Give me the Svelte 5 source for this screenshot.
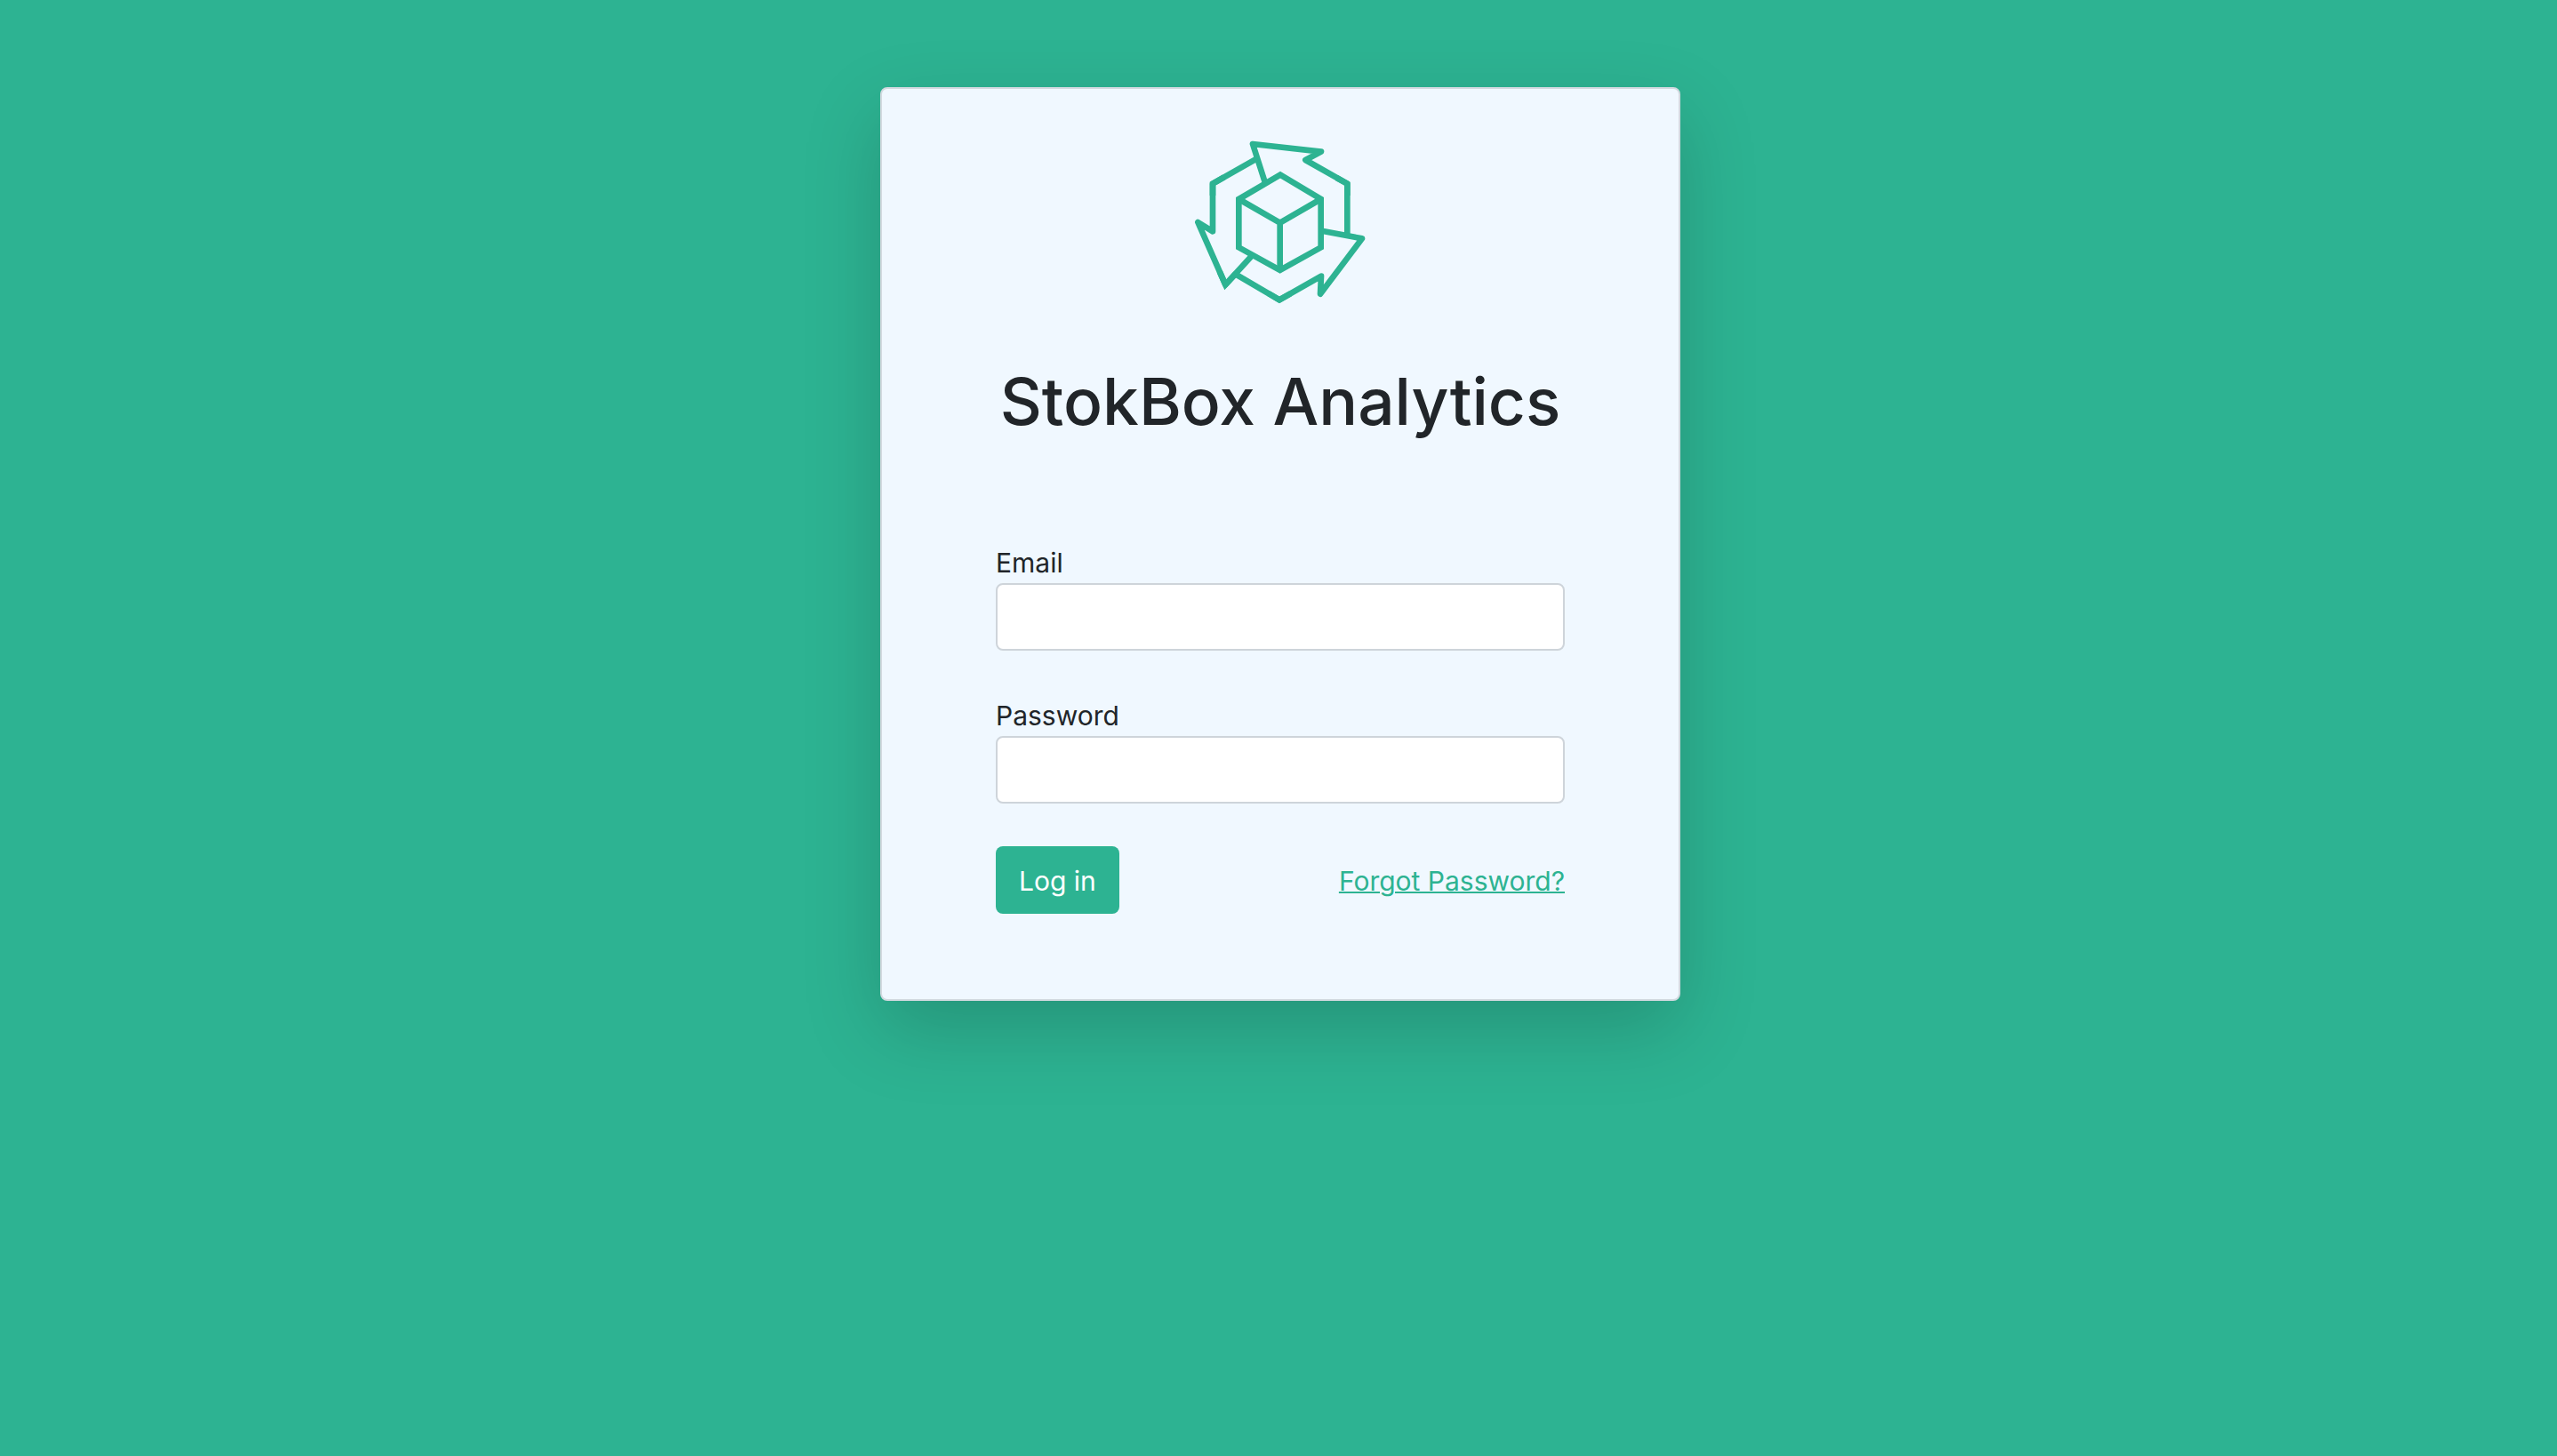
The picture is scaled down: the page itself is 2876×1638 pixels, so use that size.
<script>
  let email = $state('');
  let password = $state('');
</script>

<main class="page">
  <section class="card">
    <svg class="logo" viewBox="0 0 660 630" role="img" aria-label="StokBox logo">
      <g class="rounded">
        <path d="M279 182 L237 51 L468 77 L415 105 L556 185 V354" />
        <path d="M250 101 L102 185 V346 L52 315 L145 526 L236 426" />
        <path d="M470 344 L606 370 L465 557 L468 497 L327 577 L180 491" />
      </g>
      <g class="sharp">
        <path d="M330 155 L467 237 V400 L329 477 L190 400 V237 Z" />
        <path d="M190 237 L329 317 L467 237 M329 317 V477" />
        <path d="M520 165 L556 185 V225 M140 163 L102 185 V225 M125 481 L145 526 L180 488 M290 555 L327 577 L364 556" />
      </g>
    </svg>
    <h1>StokBox Analytics</h1>
    <form onsubmit={(event) => event.preventDefault()}>
      <div class="field">
        <label for="email">Email</label>
        <input id="email" type="email" bind:value={email} />
      </div>
      <div class="field">
        <label for="password">Password</label>
        <input id="password" type="password" bind:value={password} />
      </div>
      <div class="actions">
        <button type="submit">Log in</button>
        <a href="#forgot">Forgot Password?</a>
      </div>
    </form>
  </section>
</main>

<style>
  :global(body) {
    background: #2db392;
  }

  .page {
    box-sizing: border-box;
    display: flex;
    justify-content: center;
    min-height: 100vh;
    padding: 98px 24px 98px 28px;
    align-items: flex-start;
    font-family: Inter, "Liberation Sans", sans-serif;
    font-size: 30px;
    line-height: 48px;
    color: #212529;
  }

  .card {
    box-sizing: border-box;
    width: 100%;
    max-width: 900px;
    padding: 45px 128px 96px;
    border: 2px solid #d2d9df;
    border-radius: 8px;
    background: #f0f8ff;
    box-shadow: 0 32px 88px rgba(0, 0, 0, 0.175);
  }

  .logo {
    display: block;
    width: 220px;
    height: 210px;
    margin: 0 auto;
    fill: none;
    stroke: #2db392;
    stroke-width: 20;
  }

  .rounded {
    stroke-linejoin: round;
  }

  .sharp {
    stroke-linejoin: miter;
  }

  h1 {
    margin: 50px 0 110px;
    font-size: 73px;
    font-weight: 500;
    line-height: 93px;
    text-align: center;
    white-space: nowrap;
  }

  form {
    display: flex;
    flex-direction: column;
    gap: 48px;
  }

  .field {
    display: flex;
    flex-direction: column;
  }

  label {
    padding-top: 2px;
    line-height: 46px;
  }

  input {
    box-sizing: border-box;
    width: 100%;
    height: 76px;
    padding: 12px 24px;
    border: 2px solid #ced4da;
    border-radius: 8px;
    background: #fff;
    color: inherit;
    font: inherit;
  }

  .actions {
    display: flex;
    align-items: center;
    justify-content: space-between;
  }

  button {
    height: 76px;
    padding: 2px 26px 0;
    border: 0;
    border-radius: 8px;
    background: #2db392;
    color: #fff;
    font: inherit;
    cursor: pointer;
  }

  a {
    padding-top: 2px;
    color: #2db392;
    text-decoration: underline;
    text-decoration-thickness: 2px;
  }
</style>
